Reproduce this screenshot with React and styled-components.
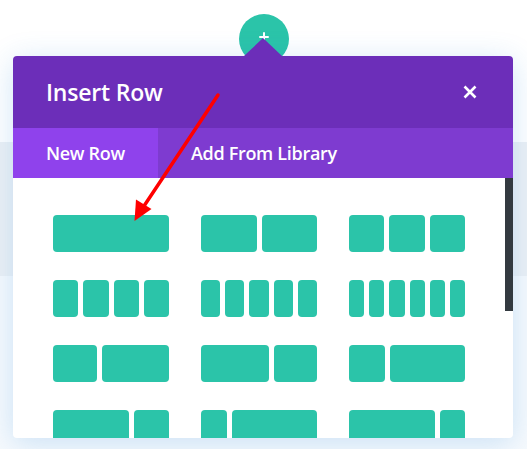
import React from 'react';
import styled, { createGlobalStyle } from 'styled-components';

const GlobalStyle = createGlobalStyle`
  html, body, #root {
    height: 100%;
    margin: 0;
  }
  body {
    font-family: "Open Sans", "Liberation Sans", sans-serif;
    overflow: hidden;
  }
`;

const Page = styled.div`
  position: relative;
  height: 100%;
  display: flex;
  flex-direction: column;
  background: #fff;
`;

const TopBand = styled.div`
  height: 142px;
  display: flex;
  justify-content: center;
  background: #fff;
`;

const GrayBand = styled.div`
  height: 134px;
  background: #edf1f5;
`;

const BottomBand = styled.div`
  flex: 1;
  background: #f7fafd;
`;

const AddButton = styled.div`
  margin-top: 14px;
  width: 50px;
  height: 50px;
  border-radius: 50%;
  background: #2bc4a9;
  position: relative;

  &::before,
  &::after {
    content: '';
    position: absolute;
    background: #fff;
    border-radius: 1px;
  }
  &::before {
    left: 20px;
    top: 22px;
    width: 10px;
    height: 2px;
  }
  &::after {
    left: 24px;
    top: 18px;
    width: 2px;
    height: 10px;
  }
`;

const Modal = styled.div`
  position: absolute;
  left: 13px;
  top: 56px;
  width: 500px;
  height: 382px;
  border-radius: 4px;
  background: #fff;
  box-shadow: 0 5px 30px rgba(43, 135, 218, 0.22);
  display: flex;
  flex-direction: column;
  overflow: visible;

  &::before {
    content: '';
    position: absolute;
    top: -18px;
    left: 50%;
    margin-left: -19px;
    border-left: 19px solid transparent;
    border-right: 19px solid transparent;
    border-bottom: 18px solid #6c2eb9;
  }
`;

const Header = styled.div`
  height: 72px;
  flex-shrink: 0;
  display: flex;
  align-items: center;
  justify-content: space-between;
  padding: 0 36px 0 33px;
  background: #6c2eb9;
  border-radius: 4px 4px 0 0;
`;

const Title = styled.h1`
  margin: 0;
  color: #fff;
  font-size: 23px;
  font-weight: 600;
  letter-spacing: -0.2px;
`;

const CloseButton = styled.button`
  border: 0;
  padding: 0;
  background: none;
  width: 14px;
  height: 14px;
  display: flex;
  cursor: pointer;
`;

const Tabs = styled.div`
  height: 50px;
  flex-shrink: 0;
  display: flex;
  background: #7e3bd0;
`;

const Tab = styled.div`
  display: flex;
  align-items: center;
  padding: 0 33px;
  color: #fff;
  font-size: 18px;
  font-weight: 600;
  letter-spacing: -0.3px;
  background: ${(p) => (p.$active ? '#8f42ec' : 'transparent')};
`;

const Body = styled.div`
  flex: 1;
  min-height: 0;
  display: flex;
  overflow: hidden;
  border-radius: 0 0 4px 4px;
`;

const Layouts = styled.div`
  flex: 1;
  padding: 37px 40px 0;
  display: grid;
  grid-template-columns: repeat(3, 116px);
  grid-auto-rows: 37px;
  column-gap: 32px;
  row-gap: 28px;
  align-content: start;
`;

const Layout = styled.div`
  display: flex;
  gap: 5px;
`;

const Column = styled.div`
  flex: ${(p) => p.$grow} 1 0;
  background: #2bc4a9;
  border-radius: 4px;
`;

const ScrollThumb = styled.div`
  width: 8px;
  height: 133px;
  flex-shrink: 0;
  background: #333a40;
`;

const Annotation = styled.svg`
  position: absolute;
  left: 0;
  top: 0;
  width: 527px;
  height: 449px;
  pointer-events: none;
`;

const layouts = [
  [1],
  [1, 1],
  [1, 1, 1],
  [1, 1, 1, 1],
  [1, 1, 1, 1, 1],
  [1, 1, 1, 1, 1, 1],
  [44, 67],
  [68, 43],
  [36, 75],
  [76, 35],
  [26, 85],
  [86, 25],
];

export default function App() {
  return (
    <>
      <GlobalStyle />
      <Page>
        <TopBand>
          <AddButton />
        </TopBand>
        <GrayBand />
        <BottomBand />

        <Modal>
          <Header>
            <Title>Insert Row</Title>
            <CloseButton aria-label="Close">
              <svg width="14" height="14" viewBox="0 0 14 14">
                <path d="M1.5 1.5 L12.5 12.5 M12.5 1.5 L1.5 12.5" stroke="#fff" strokeWidth="2.6" />
              </svg>
            </CloseButton>
          </Header>
          <Tabs>
            <Tab $active>New Row</Tab>
            <Tab>Add From Library</Tab>
          </Tabs>
          <Body>
            <Layouts>
              {layouts.map((cols, i) => (
                <Layout key={i}>
                  {cols.map((g, j) => (
                    <Column key={j} $grow={g} />
                  ))}
                </Layout>
              ))}
            </Layouts>
            <ScrollThumb />
          </Body>
        </Modal>

        <Annotation viewBox="0 0 527 449">
          <line x1="218" y1="95" x2="144" y2="206" stroke="#ff0000" strokeWidth="3.5" strokeLinecap="round" />
          <polygon points="134.5,221 136,199.5 151.5,209" fill="#ff0000" />
        </Annotation>
      </Page>
    </>
  );
}
